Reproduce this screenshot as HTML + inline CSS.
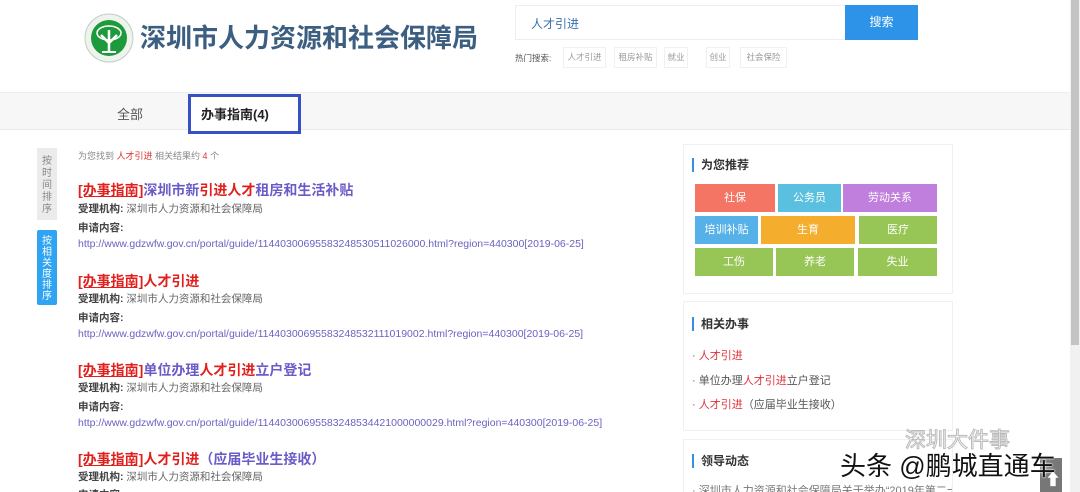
<!DOCTYPE html>
<html><head><meta charset="utf-8"><style>
*{margin:0;padding:0;box-sizing:border-box}
html,body{width:1080px;height:492px;overflow:hidden}
body{background:#fff;font-family:"Liberation Sans","Noto Sans CJK SC",sans-serif;position:relative;color:#333}
.a{position:absolute;white-space:nowrap}
.t{font-size:14px;font-weight:bold;color:#6a5cc8}
.t .r{color:#e0201c}
.t u{color:#e0201c;text-decoration:underline}
.l1{font-size:10.5px;color:#666}
.l1 b{color:#444}
.url{font-size:10.5px;color:#6a62c0}
.box{position:absolute;left:683px;width:270px;border:1px solid #f0f0f0;background:#fff;overflow:hidden}
.hd{position:absolute;left:8px;font-size:12px;font-weight:bold;color:#333;border-left:2px solid #3a8ee0;padding-left:7px;line-height:14px}
.tile{position:absolute;color:#fff;font-size:11px;text-align:center;line-height:28px;height:28px}
.li{position:absolute;left:8px;font-size:11px;color:#555;white-space:nowrap}
.li i{font-style:normal;color:#e0303a}
.tag{position:absolute;top:47px;height:21px;border:1px solid #f0f0f0;font-size:8.5px;color:#999;text-align:center;line-height:19px}
</style></head><body>
<svg class="a" style="left:84px;top:13px" width="50" height="50" viewBox="0 0 50 50"><circle cx="25" cy="25" r="24" fill="#eef3ee" stroke="#bfcfbf"/><circle cx="25" cy="25" r="18" fill="#1c9a3c"/><path d="M25 40 V26 M25 30 L17 22 M25 30 L33 22 M25 27 L25 17" stroke="#fff" stroke-width="2.5" fill="none"/><ellipse cx="25" cy="20" rx="12" ry="7" fill="none" stroke="#fff" stroke-width="1.5"/><rect x="18" y="38" width="14" height="2" fill="#fff"/></svg>
<div class="a" style="left:140px;top:18px;font-size:26px;font-weight:bold;color:#3c5e80">深圳市人力资源和社会保障局</div>
<div class="a" style="left:515px;top:5px;width:331px;height:35px;border:1px solid #eee"></div>
<div class="a" style="left:531px;top:15px;font-size:12px;color:#3a70b0">人才引进</div>
<div class="a" style="left:845px;top:5px;width:73px;height:35px;background:#2d93e8;color:#fff;font-size:12px;text-align:center;line-height:35px">搜索</div>
<div class="a" style="left:515px;top:52px;font-size:8.5px;color:#555;line-height:12px">热门搜索:</div>
<div class="tag" style="left:563px;width:43px">人才引进</div>
<div class="tag" style="left:614px;width:43px">租房补贴</div>
<div class="tag" style="left:664px;width:24px">就业</div>
<div class="tag" style="left:706px;width:24px">创业</div>
<div class="tag" style="left:740px;width:47px">社会保险</div>
<div class="a" style="left:0;top:92px;width:1070px;height:38px;background:#f7f7f7;border-top:1px solid #eee;border-bottom:1px solid #eaeaea"></div>
<div class="a" style="left:117px;top:104px;font-size:13px;color:#555">全部</div>
<div class="a" style="left:188px;top:94px;width:113px;height:40px;background:#fff;border:3px solid #3551c4"></div>
<div class="a" style="left:201px;top:104px;font-size:13px;font-weight:bold;color:#222">办事指南(4)</div>
<div class="a" style="left:1070px;top:0;width:10px;height:492px;background:#f1f1f1"></div>
<div class="a" style="left:1071px;top:0;width:8px;height:345px;background:#c4c4c4"></div>
<div class="a" style="left:37px;top:148px;width:20px;height:72px;background:#ebebeb;color:#888;font-size:10px;line-height:12px;text-align:center;padding-top:8px;white-space:normal">按<br>时<br>间<br>排<br>序</div>
<div class="a" style="left:37px;top:230px;width:20px;height:75px;background:#2fa4f2;color:#fff;font-size:10px;line-height:11px;text-align:center;padding-top:6px;border-radius:2px;white-space:normal;overflow:hidden">按<br>相<br>关<br>度<br>排<br>序</div>
<div class="a" style="left:78px;top:149px;font-size:9px;color:#888">为您找到 <span style="color:#e03030">人才引进</span> 相关结果约 <span style="color:#e03030">4</span> 个</div>
<div class="a t" style="left:78px;top:180px"><u>[办事指南]</u>深圳市新<span class="r">引进人才</span>租房和生活补贴</div>
<div class="a l1" style="left:78px;top:201px"><b>受理机构:</b> 深圳市人力资源和社会保障局</div>
<div class="a l1" style="left:78px;top:220px"><b>申请内容:</b></div>
<div class="a url" style="left:78px;top:238px">http://www.gdzwfw.gov.cn/portal/guide/11440300695583248530511026000.html?region=440300[2019-06-25]</div>
<div class="a t" style="left:78px;top:271px"><u>[办事指南]</u><span class="r">人才引进</span></div>
<div class="a l1" style="left:78px;top:291px"><b>受理机构:</b> 深圳市人力资源和社会保障局</div>
<div class="a l1" style="left:78px;top:310px"><b>申请内容:</b></div>
<div class="a url" style="left:78px;top:328px">http://www.gdzwfw.gov.cn/portal/guide/11440300695583248532111019002.html?region=440300[2019-06-25]</div>
<div class="a t" style="left:78px;top:360px"><u>[办事指南]</u>单位办理<span class="r">人才引进</span>立户登记</div>
<div class="a l1" style="left:78px;top:380px"><b>受理机构:</b> 深圳市人力资源和社会保障局</div>
<div class="a l1" style="left:78px;top:399px"><b>申请内容:</b></div>
<div class="a url" style="left:78px;top:417px">http://www.gdzwfw.gov.cn/portal/guide/11440300695583248534421000000029.html?region=440300[2019-06-25]</div>
<div class="a t" style="left:78px;top:449px"><u>[办事指南]</u><span class="r">人才引进</span>（应届毕业生接收）</div>
<div class="a l1" style="left:78px;top:469px"><b>受理机构:</b> 深圳市人力资源和社会保障局</div>
<div class="a l1" style="left:78px;top:487px"><b>申请内容:</b></div>
<div class="box" style="top:144px;height:150px">
<div class="hd" style="top:13px">为您推荐</div>
<div class="tile" style="left:11px;top:39px;width:80px;background:#f47563">社保</div>
<div class="tile" style="left:94px;top:39px;width:63px;background:#5bbfe0">公务员</div>
<div class="tile" style="left:159px;top:39px;width:94px;background:#c07fdc">劳动关系</div>
<div class="tile" style="left:11px;top:71px;width:63px;background:#55b1e8">培训补贴</div>
<div class="tile" style="left:77px;top:71px;width:94px;background:#f5ad2e">生育</div>
<div class="tile" style="left:175px;top:71px;width:78px;background:#97c556">医疗</div>
<div class="tile" style="left:11px;top:103px;width:78px;background:#97c556">工伤</div>
<div class="tile" style="left:92px;top:103px;width:78px;background:#97c556">养老</div>
<div class="tile" style="left:174px;top:103px;width:79px;background:#97c556">失业</div>
</div>
<div class="box" style="top:301px;height:130px">
<div class="hd" style="top:15px">相关办事</div>
<div class="li" style="top:45px">· <i>人才引进</i></div>
<div class="li" style="top:70px">· 单位办理<i>人才引进</i>立户登记</div>
<div class="li" style="top:94px">· <i>人才引进</i>（应届毕业生接收）</div>
</div>
<div class="box" style="top:439px;height:60px">
<div class="hd" style="top:14px">领导动态</div>
<div class="li" style="top:42px;color:#777">· 深圳市人力资源和社会保障局关于举办“2019年第二十</div>
</div>
<div class="a" style="left:905px;top:424px;font-size:21px;color:rgba(255,255,255,0.8);-webkit-text-stroke:1px #bbb">深圳大件事</div>
<div class="a" style="left:1040px;top:458px;width:22px;height:34px;background:#777"></div>
<div class="a" style="left:1045px;top:466px;font-size:16px;color:#fff;font-weight:bold">⬆</div>
<div class="a" style="left:840px;top:446px;font-size:26px;color:#111;text-shadow:0 0 2px #fff,0 0 2px #fff">头条 @鹏城直通车</div>
</body></html>
